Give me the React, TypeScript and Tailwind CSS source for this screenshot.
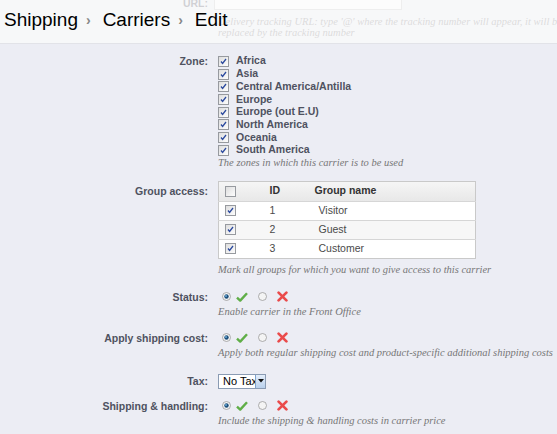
import type { ReactNode } from 'react'

const zones = [
  'Africa',
  'Asia',
  'Central America/Antilla',
  'Europe',
  'Europe (out E.U)',
  'North America',
  'Oceania',
  'South America'
]

const groups = [
  { id: 1, name: 'Visitor' },
  { id: 2, name: 'Guest' },
  { id: 3, name: 'Customer' }
]

function Checkbox({ checked = true }: { checked?: boolean }) {
  return (
    <svg width="11" height="11" viewBox="0 0 11 11" className="shrink-0">
      <defs>
        <linearGradient id="cbg" x1="0" y1="0" x2="1" y2="1">
          <stop offset="0" stopColor="#dcdcdc" />
          <stop offset="1" stopColor="#ffffff" />
        </linearGradient>
      </defs>
      <rect x="0.5" y="0.5" width="10" height="10" fill="url(#cbg)" stroke="#979a9f" />
      {checked && (
        <path d="M3 5.5 L4.6 7.5 L8 3" fill="none" stroke="#2c4a9e" strokeWidth="1.3" />
      )}
    </svg>
  )
}

function Radio({ on }: { on?: boolean }) {
  return (
    <svg width="9" height="9" viewBox="0 0 9 9" className="shrink-0">
      <circle cx="4.5" cy="4.5" r="4" fill="#f4f4f4" stroke="#9a9a9a" strokeWidth="0.8" />
      {on && <circle cx="4.5" cy="4.5" r="2.2" fill="#1d4f7a" />}
      {on && <circle cx="4" cy="4" r="0.9" fill="#6fb0e0" />}
    </svg>
  )
}

function Tick() {
  return (
    <svg width="12" height="10" viewBox="0 0 12 10" className="shrink-0">
      <path d="M1 5.6 L4.2 8.6 L11 1.2" fill="none" stroke="#5fae47" strokeWidth="2.4" strokeLinejoin="round" />
    </svg>
  )
}

function Cross() {
  return (
    <svg width="11" height="11" viewBox="0 0 11 11" className="shrink-0">
      <path d="M1.6 1.6 L9.4 9.4 M9.4 1.6 L1.6 9.4" stroke="#ea4b4b" strokeWidth="2.7" strokeLinecap="round" />
    </svg>
  )
}

function Help({ children }: { children: ReactNode }) {
  return (
    <p className="font-['Liberation_Serif',serif] italic text-[10.5px] leading-[12px] text-[#777] whitespace-nowrap">
      {children}
    </p>
  )
}

function Row({ label, children, className = '', labelClass = '' }: { label: string; children: ReactNode; className?: string; labelClass?: string }) {
  return (
    <div className={`flex ${className}`}>
      <div className={`w-[209px] shrink-0 text-right pr-px font-bold text-[10.5px] text-[#4f5260] ${labelClass}`}>
        {label}
      </div>
      <div className="pl-[9px] min-w-0">{children}</div>
    </div>
  )
}

function Toggle({ help }: { help: string }) {
  return (
    <div>
      <div className="flex items-center h-[14px]">
        <span className="ml-[4px]"><Radio on /></span>
        <span className="ml-[5px]"><Tick /></span>
        <span className="ml-[10px]"><Radio /></span>
        <span className="ml-[10px]"><Cross /></span>
      </div>
      <div className="mt-[2px]">
        <Help>{help}</Help>
      </div>
    </div>
  )
}

export default function App() {
  return (
    <div className="relative w-[557px] h-[434px] overflow-hidden bg-[#ecedf4] font-['Liberation_Sans',Arial,sans-serif]">
      <div className="mt-[-7px]">
        <Row label="URL:" labelClass="leading-[14px] pt-[3px]">
          <div className="w-[188px] h-[17px] bg-white border border-[#c8c8c8] ml-[-4px]" />
          <div className="mt-[6px] font-['Liberation_Serif',serif] italic text-[10.5px] leading-[11px] text-[#7c7c7c] whitespace-nowrap">
            <p>Delivery tracking URL: type '@' where the tracking number will appear, it will be then automatically</p>
            <p>replaced by the tracking number</p>
          </div>
        </Row>

        <Row label="Zone:" className="mt-[17px]" labelClass="leading-[12.7px]">
          <ul>
            {zones.map((z) => (
              <li key={z} className="flex items-center gap-[7px] h-[12.7px] font-bold text-[10.5px] text-[#4f5260]">
                <Checkbox />
                <span>{z}</span>
              </li>
            ))}
          </ul>
          <Help>The zones in which this carrier is to be used</Help>
        </Row>

        <Row label="Group access:" className="mt-[12px]" labelClass="pt-[4px] leading-[12px]">
          <table className="w-[258px] border-collapse border border-[#c9c9c9] text-[10.5px] text-[#4a4a4a]">
            <thead>
              <tr className="h-[20px] bg-gradient-to-b from-[#f6f6f6] to-[#e8e8e8] text-[#333] font-bold">
                <th className="w-[51px] pl-[6px] text-left"><Checkbox checked={false} /></th>
                <th className="w-[45px] text-left font-bold">ID</th>
                <th className="text-left font-bold">Group name</th>
              </tr>
            </thead>
            <tbody>
              {groups.map((g, i) => (
                <tr key={g.id} className={`h-[19px] border-t border-[#d6d6d6] ${i === 1 ? 'bg-[#f7f7f7]' : 'bg-white'}`}>
                  <td className="pl-[6px]"><Checkbox /></td>
                  <td>{g.id}</td>
                  <td className="pl-[4px]">{g.name}</td>
                </tr>
              ))}
            </tbody>
          </table>
          <div className="mt-[5px]">
            <Help>Mark all groups for which you want to give access to this carrier</Help>
          </div>
        </Row>

        <Row label="Status:" className="mt-[14px]" labelClass="leading-[14px]">
          <Toggle help="Enable carrier in the Front Office" />
        </Row>

        <Row label="Apply shipping cost:" className="mt-[13px]" labelClass="leading-[14px]">
          <Toggle help="Apply both regular shipping cost and product-specific additional shipping costs" />
        </Row>

        <Row label="Tax:" className="mt-[15px]" labelClass="leading-[15px]">
          <div className="flex items-stretch w-[48px] h-[15px] bg-white border border-[#8a9bb3]">
            <span className="flex-1 pl-[4px] text-[11px] leading-[13px] text-black whitespace-nowrap overflow-hidden">No Tax</span>
            <span className="w-[10px] flex items-center justify-center bg-gradient-to-b from-[#e4eefa] to-[#b9d0ec] border-l border-[#7ea3cf]">
              <svg width="6" height="4" viewBox="0 0 6 4"><path d="M0 0 H6 L3 3.5 Z" fill="#111" /></svg>
            </span>
          </div>
        </Row>

        <Row label="Shipping & handling:" className="mt-[10px]" labelClass="leading-[14px]">
          <Toggle help="Include the shipping & handling costs in carrier price" />
        </Row>
      </div>

      <header className="absolute top-0 left-0 right-0 h-[44px] bg-[#fbfbfb]/75 border-b border-[#e2e3e8] flex items-center pl-[4px] pb-[2px] text-[19px] text-black">
        <span>Shipping</span>
        <span className="ml-[8px] mr-[12px] text-[#888] text-[14px] font-bold">›</span>
        <span>Carriers</span>
        <span className="ml-[8px] mr-[12px] text-[#888] text-[14px] font-bold">›</span>
        <span>Edit</span>
      </header>
    </div>
  )
}
